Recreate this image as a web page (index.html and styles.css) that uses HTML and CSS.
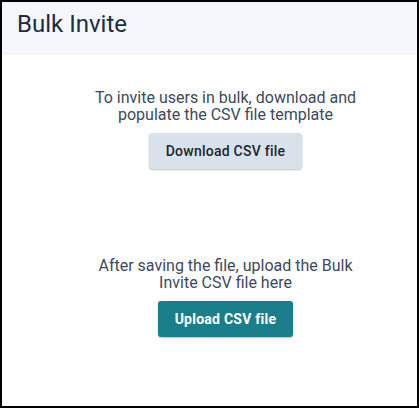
FILE: index.html
```html
<!DOCTYPE html>
<html>
<head>
<meta charset="utf-8">
<link rel="stylesheet" href="styles.css">
</head>
<body>
<div class="panel">
  <div class="header"><h1 class="title">Bulk Invite</h1></div>
  <div class="content">
    <section class="step step-download">
      <p class="desc">To invite users in bulk, download and populate the CSV file template</p>
      <button class="btn btn-secondary">Download CSV file</button>
    </section>
    <section class="step step-upload">
      <p class="desc">After saving the file, upload the Bulk Invite CSV file here</p>
      <button class="btn btn-primary">Upload CSV file</button>
    </section>
  </div>
</div>
</body>
</html>
```
FILE: styles.css
```css
* { box-sizing: border-box; }
html, body { margin: 0; padding: 0; }
body { font-family: Roboto, "Liberation Sans", sans-serif; background: #fff; }
.panel {
  width: 419px;
  height: 408px;
  border: 2px solid #000;
  display: flex;
  flex-direction: column;
}
.header {
  height: 53px;
  background: #f3f7fb;
  padding: 8px 0 0 15px;
}
.title {
  margin: 0;
  font-size: 24px;
  line-height: 28px;
  font-weight: 400;
  color: #1d2c3e;
}
.content {
  display: flex;
  flex-direction: column;
  align-items: center;
  padding: 34px 0 0 32px;
}
.step {
  display: flex;
  flex-direction: column;
  align-items: center;
  gap: 10px;
}
.step-upload { margin-top: 88px; }
.desc {
  margin: 0;
  max-width: 270px;
  text-align: center;
  font-size: 16px;
  line-height: 17px;
  color: #3c4a5b;
}
.btn {
  height: 36px;
  padding: 0 17px;
  border: none;
  border-radius: 3px;
  font-family: Roboto, "Liberation Sans", sans-serif;
  font-size: 14px;
  letter-spacing: 0.25px;
  box-shadow: 0 1px 2px rgba(0, 0, 0, 0.25);
}
.btn-secondary {
  background: #d9e1eb;
  color: #1d2533;
  font-weight: 500;
}
.btn-primary {
  background: #1a7f8b;
  color: #fff;
  font-weight: 700;
}
```
